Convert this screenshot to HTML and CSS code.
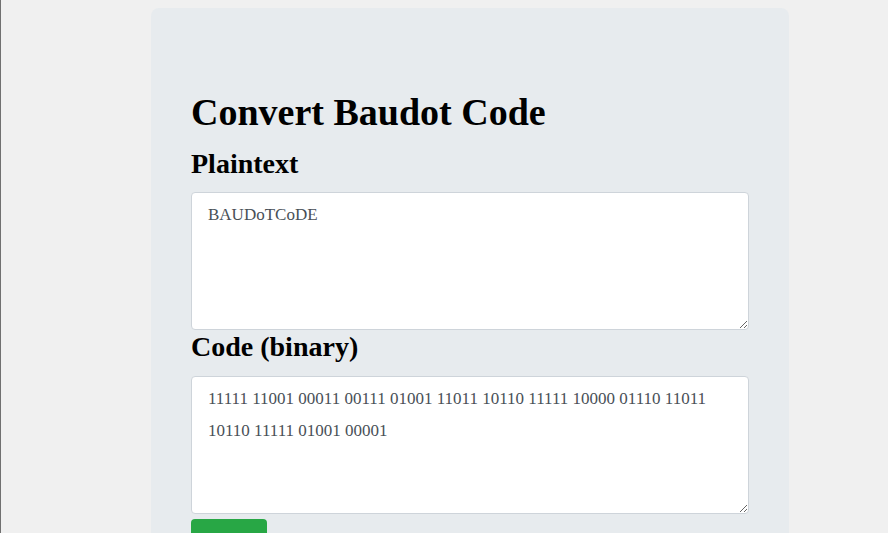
FILE: index.html
```html
<!DOCTYPE html>
<html lang="en">
<head>
<meta charset="utf-8">
<title>Convert Baudot Code</title>
<link rel="stylesheet" href="styles.css">
</head>
<body>
<main class="card">
  <h1 class="title">Convert Baudot Code</h1>
  <h2 class="label">Plaintext</h2>
  <textarea class="field">BAUDoTCoDE</textarea>
  <h2 class="label">Code (binary)</h2>
  <textarea class="field">11111 11001 00011 00111 01001 11011 10110 11111 10000 01110 11011 10110 11111 01001 00001</textarea>
  <button class="btn" type="button">Convert</button>
</main>
</body>
</html>
```

FILE: styles.css
```css
html, body {
  margin: 0;
  padding: 0;
}
body {
  background: #f0f0f0;
  border-left: 1px solid #707070;
  min-height: 533px;
  box-sizing: border-box;
  overflow: hidden;
  font-family: "Liberation Serif", "Times New Roman", serif;
  color: #000;
}
.card {
  margin: 8px 0 0 150px;
  width: 638px;
  box-sizing: border-box;
  padding: 82px 40px 40px;
  background: #e7ebee;
  border-radius: 8px;
}
.title {
  margin: 0 0 11px;
  font-size: 38px;
  line-height: 1.2;
  font-weight: 700;
}
.label {
  margin: 0 0 12px;
  font-size: 28px;
  line-height: 1.2;
  font-weight: 700;
}
.field {
  display: block;
  width: 558px;
  height: 138px;
  box-sizing: border-box;
  margin: 0;
  padding: 6px 16px;
  border: 1px solid #ced4da;
  border-radius: 4px;
  background: #fff;
  color: #495057;
  font-family: "Liberation Serif", "Times New Roman", serif;
  font-size: 17px;
  line-height: 32px;
  overflow: hidden;
}
.btn {
  display: block;
  margin-top: 5px;
  width: 76px;
  padding: 20px 0 10px;
  border: 0;
  border-radius: 4px;
  background: #28a745;
  color: #fff;
  font-family: "Liberation Serif", "Times New Roman", serif;
  font-size: 16px;
  line-height: 20px;
}
```
